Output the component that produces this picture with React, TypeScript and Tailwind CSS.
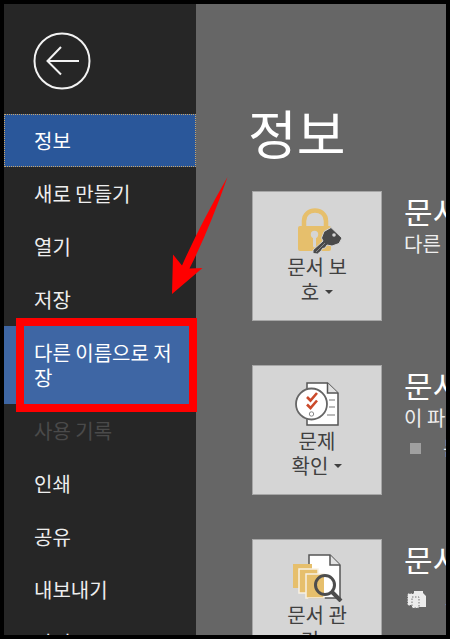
import type { ReactNode } from "react";

type NavEntry = { label: string; state?: "current" | "hover" | "disabled" };

const entries: NavEntry[] = [
  { label: "정보", state: "current" },
  { label: "새로 만들기" },
  { label: "열기" },
  { label: "저장" },
  { label: "다른 이름으로 저장", state: "hover" },
  { label: "사용 기록", state: "disabled" },
  { label: "인쇄" },
  { label: "공유" },
  { label: "내보내기" },
  { label: "닫기" },
];

const stateClass = {
  current:
    "bg-[#2a579a] text-white outline-1 -outline-offset-1 outline-dotted outline-[#c9a56a]",
  hover: "bg-[#3e66a4] text-white",
  disabled: "text-[#4a4a4a]",
  normal: "text-[#eeeeee]",
};

function Callout() {
  return (
    <>
      <span className="pointer-events-none absolute -top-2 -right-px -bottom-2 left-3 border-8 border-[#ff0000]" />
      <svg
        className="pointer-events-none absolute bottom-full left-42 mb-8"
        width="56"
        height="117"
        viewBox="0 0 56 117"
        fill="#ff0000"
        aria-hidden="true"
      >
        <path d="M55.5 0 Q37 53 17.5 91.5 L30.5 91 L0 117 L1 77.5 L10 88.5 Q28 48 55.5 0Z" />
      </svg>
    </>
  );
}

function NavItem({ label, state }: NavEntry) {
  return (
    <li className="relative">
      <button
        type="button"
        disabled={state === "disabled"}
        className={`block w-full py-[14px] pr-4 pl-[30px] text-left text-[20px] leading-[25px] ${stateClass[state ?? "normal"]}`}
      >
        {label}
      </button>
      {state === "hover" && <Callout />}
    </li>
  );
}

function LockIcon() {
  return (
    <svg width="48" height="48" viewBox="-1 -2 48 48" fill="none" className="ml-1" aria-hidden="true">
      <path d="M8 19V13C8 -1 30 -1 30 13V19" stroke="#e6bf6c" strokeWidth="4.5" />
      <rect x="2" y="18" width="33" height="25" rx="2" fill="#e6bf6c" />
      <circle cx="18.5" cy="26.5" r="3.7" fill="#d5d5d5" />
      <path d="M18.5 27V38" stroke="#d5d5d5" strokeWidth="3" strokeLinecap="round" />
      <path
        d="M35 19.500 L46 30 L43 35.500 L36 38 L31 37 L29 40 L26.500 40.500 L25 43 L21.500 46 L17 45.500 V42 L27 33 L25.500 30 L28 23.500Z"
        fill="#4a4a4a"
        stroke="#d5d5d5"
        strokeWidth="1"
      />
      <circle cx="38" cy="27" r="1.8" fill="#d5d5d5" />
      <path d="M20 44L29 35" stroke="#8a8a8a" strokeWidth="1" />
    </svg>
  );
}

function InspectIcon() {
  return (
    <svg width="48" height="48" viewBox="0 1 48 48" fill="none" aria-hidden="true">
      <path d="M14 4H34.5L45 14V46H14Z" fill="#fff" stroke="#555" strokeWidth="1.5" />
      <path d="M34.5 4V14H45" fill="#e2e2e2" stroke="#555" strokeWidth="1.5" />
      <path d="M36 21H42M36 28H42M34 36H42" stroke="#777" strokeWidth="1.2" />
      <circle cx="18.5" cy="25" r="15.5" fill="#fff" stroke="#666" strokeWidth="1.8" />
      <path d="M14 18L17.500 21.500L24 14M14 25.500L17.500 29L24 21.500" stroke="#cb4a2b" strokeWidth="2.6" />
      <circle cx="18.5" cy="35" r="2.2" stroke="#888" strokeWidth="1" />
    </svg>
  );
}

function VersionsIcon() {
  return (
    <svg width="56" height="48" viewBox="-1 1 56 48" fill="none" aria-hidden="true">
      <path d="M19 2H40L50 12V45H19Z" fill="#fff" stroke="#555" strokeWidth="1.5" />
      <path d="M40 2V12H50" fill="#e2e2e2" stroke="#555" strokeWidth="1.5" />
      <path d="M3 11H22V35H3Z" fill="#e6bf6c" />
      <path d="M9 16H28V40H9Z" fill="#e6bf6c" stroke="#f7f1e4" strokeWidth="1.5" />
      <path d="M16 21H34V45H16Z" fill="#e6bf6c" stroke="#f7f1e4" strokeWidth="1.5" />
      <circle cx="35" cy="32" r="9.5" fill="#fff" />
      <path d="M34 22.500A9.500 9.500 0 1 0 34 41.500Z" fill="#e6bf6c" />
      <circle cx="35" cy="32" r="9.5" stroke="#4d4d4d" strokeWidth="3" />
      <path d="M42 39L51 48" stroke="#4d4d4d" strokeWidth="4" />
    </svg>
  );
}

function PagesIcon() {
  return (
    <svg width="20" height="18" viewBox="0 0 20 18" fill="none" aria-hidden="true">
      <path d="M7 0H16V2L19 5V16H7Z" fill="#ececec" />
      <path d="M1 3H9V14H1Z" fill="#ececec" stroke="#ececec" strokeDasharray="1.5 1" />
      <path d="M5 6H12V17H5Z" fill="#ececec" stroke="#777" strokeDasharray="1.5 1.5" />
    </svg>
  );
}

function Section({
  icon,
  lines,
  children,
}: {
  icon: ReactNode;
  lines: [string, string];
  children: ReactNode;
}) {
  return (
    <section className="flex shrink-0 gap-[22px]">
      <button
        type="button"
        className="flex h-[130px] w-[130px] shrink-0 flex-col items-center border border-[#a6a6a6] bg-[#d5d5d5] pt-[14px] text-[20px] leading-[25px] text-[#404040]"
      >
        {icon}
        <span>{lines[0]}</span>
        <span className="flex items-center gap-1.5">
          {lines[1]}
          <span className="border-x-4 border-t-4 border-x-transparent border-t-[#404040]" />
        </span>
      </button>
      <div className="whitespace-nowrap text-[20px] leading-[26px] text-[#eeeeee]">{children}</div>
    </section>
  );
}

function SectionTitle() {
  return <h2 className="pt-1 pb-1 text-[31px] leading-8 text-white">문서</h2>;
}

export default function App() {
  return (
    <div className="flex h-screen overflow-hidden border-4 border-black bg-[#666666] font-['Noto_Sans_CJK_KR',sans-serif]">
      <nav className="relative z-10 w-48 shrink-0 bg-[#262626]">
        <div className="flex h-[110px] items-start pt-7 pl-[29px]">
          <button type="button" aria-label="뒤로" className="rounded-full">
            <svg width="58" height="58" viewBox="0 0 58 58" fill="none" stroke="#f2f2f2" aria-hidden="true">
              <circle cx="29" cy="29" r="27.5" strokeWidth="2" />
              <path d="M46 29H15" strokeWidth="2" />
              <path d="M28 15L14.500 29L28 42.500" strokeWidth="2" />
            </svg>
          </button>
        </div>
        <ul>
          {entries.map((entry) => (
            <NavItem key={entry.label} {...entry} />
          ))}
        </ul>
      </nav>

      <main className="flex min-w-0 flex-1 flex-col overflow-hidden pl-14">
        <h1 className="-ml-1 pt-[96px] pb-[27px] text-[53px] leading-[64px] text-white">정보</h1>
        <div className="flex flex-col gap-11">
          <Section icon={<LockIcon />} lines={["문서 보", "호"]}>
            <SectionTitle />
            <p>다른</p>
          </Section>
          <Section icon={<InspectIcon />} lines={["문제", "확인"]}>
            <SectionTitle />
            <p>이 파</p>
            <ul>
              <li className="flex items-center gap-[22px] pt-1 pl-1.5">
                <span className="size-[11px] bg-[#a0a0a0]" />문
              </li>
            </ul>
          </Section>
          <Section icon={<VersionsIcon />} lines={["문서 관", "리"]}>
            <SectionTitle />
            <p className="flex items-center gap-[18px] pt-2 pl-[3px]">
              <PagesIcon />저
            </p>
          </Section>
        </div>
      </main>
    </div>
  );
}
